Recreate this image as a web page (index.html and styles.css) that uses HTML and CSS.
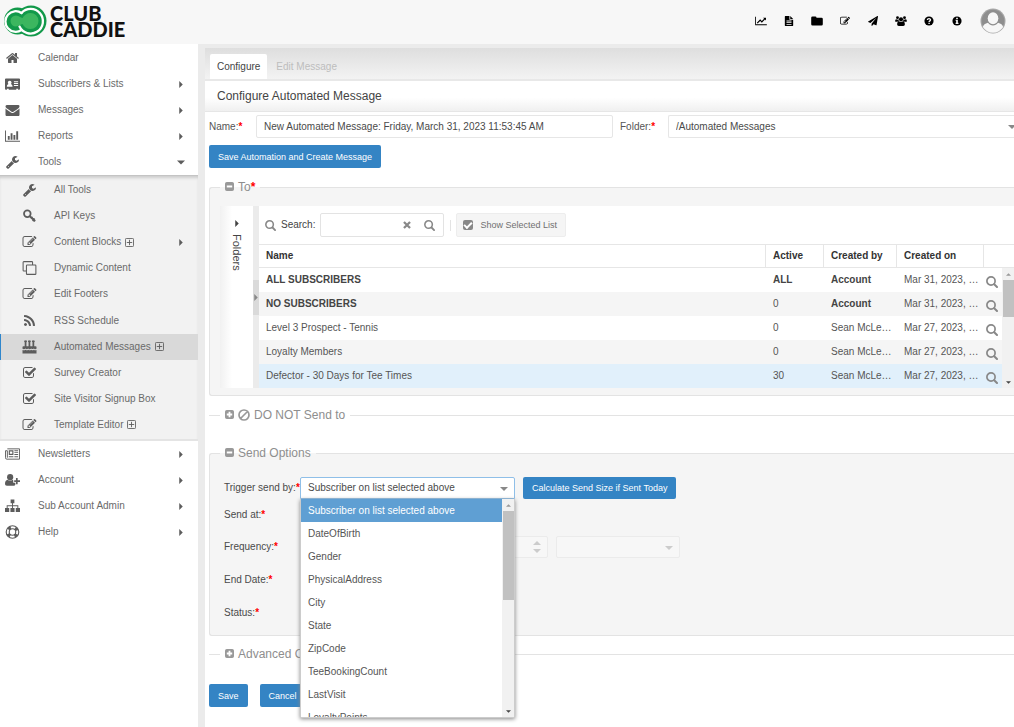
FILE: index.html
```html
<!DOCTYPE html>
<html lang="en">
<head>
<meta charset="utf-8">
<title>Configure Automated Message</title>
<link rel="stylesheet" href="styles.css">
</head>
<body>
<svg class="sprite" aria-hidden="true">
  <symbol id="home" viewBox="0 0 1792 1792"><path d="M1472 992v480q0 26-19 45t-45 19h-384v-384h-256v384h-384q-26 0-45-19t-19-45v-480q0-1 .5-3t.5-3l575-474 575 474q1 2 1 6zm223-69l-62 74q-8 9-21 11h-3q-13 0-21-7l-692-577-692 577q-12 8-24 7-13-2-21-11l-62-74q-8-10-7-23.5t11-21.5l719-599q32-26 76-26t76 26l244 204v-195q0-14 9-23t23-9h192q14 0 23 9t9 23v408l219 182q10 8 11 21.5t-7 23.5z"/></symbol>
  <symbol id="card" viewBox="0 0 16 14"><path fill-rule="evenodd" d="M1 1h14a1 1 0 0 1 1 1v10a1 1 0 0 1-1 1h-1v-1h-2v1H4v-1H2v1H1a1 1 0 0 1-1-1V2a1 1 0 0 1 1-1zM5 3.500a2 2 0 0 0-1.300 3.500C2.500 7.500 2 8.500 2 10h6c0-1.500-.5-2.500-1.700-3A2 2 0 0 0 5 3.500zM9.500 4v1H14V4zM9.500 6v1H14V6zM9.500 8v1H14V8z"/></symbol>
  <symbol id="envelope" viewBox="0 0 1792 1792"><path d="M1792 710v794q0 66-47 113t-113 47h-1472q-66 0-113-47t-47-113v-794q44 49 101 87 362 246 497 345 57 42 92.500 65.500t94.500 48 110 24.500h2q51 0 110-24.500t94.500-48 92.500-65.500q170-123 498-345 57-39 100-87zm0-294q0 79-49 151t-122 123q-376 261-468 325-10 7-42.500 31t-54 38.500-52 32.500-57.500 27-50 9h-2q-23 0-50-9t-57.500-27-52-32.500-54-38.500-42.500-31q-91-64-262-182.500t-205-142.500q-62-42-117-115.500t-55-136.500q0-78 41.500-130t118.500-52h1472q65 0 112.500 47t47.500 113z"/></symbol>
  <symbol id="bars" viewBox="0 0 16 14"><path d="M0 1h1v11h15v1H0zM3 7h2v4H3zM6 4h2v7H6zM9 6h2v5H9zM12 2h2v9h-2z"/></symbol>
  <symbol id="wrench" viewBox="0 0 1792 1792"><path d="M448 1472q0-26-19-45t-45-19-45 19-19 45 19 45 45 19 45-19 19-45zm644-420l-682 682q-37 37-90 37-52 0-91-37l-106-108q-38-36-38-90 0-53 38-91l681-681q39 98 114.500 173.500t173.500 114.500zm634-435q0 39-23 106-47 134-164.500 217.500t-258.500 83.500q-185 0-316.500-131.500t-131.500-316.500 131.500-316.500 316.500-131.500q58 0 121.500 16.500t107.500 46.500q16 11 16 28t-16 28l-293 169v224l193 107q5-3 79-48.500t135.500-81 70.500-35.500q15 0 23.500 10t8.500 25z"/></symbol>
  <symbol id="key" viewBox="0 0 16 16"><path fill="none" stroke="currentColor" stroke-width="2" d="M8 8l6.500 6M11.500 13.500l2.500-2.500M9.500 11l2-2"/><circle cx="5.500" cy="5.500" r="3.800" fill="none" stroke="currentColor" stroke-width="2"/></symbol>
  <symbol id="edit" viewBox="0 0 1792 1792"><path d="M888 1184l116-116-152-152-116 116v56h96v96h56zm440-720q-16-16-33 1l-350 350q-17 17-1 33t33-1l350-350q17-17 1-33zm80 594v190q0 119-84.500 203.500t-203.500 84.500h-832q-119 0-203.500-84.500t-84.500-203.500v-832q0-119 84.500-203.500t203.500-84.500h832q63 0 117 25 15 7 18 23 3 17-9 29l-49 49q-14 14-32 8-23-6-45-6h-832q-66 0-113 47t-47 113v832q0 66 47 113t113 47h832q66 0 113-47t47-113v-126q0-13 9-22l64-64q15-15 35-7t20 29zm-96-738l288 288-672 672h-288v-288zm444 132l-92 92-288-288 92-92q28-28 68-28t68 28l152 152q28 28 28 68t-28 68z"/></symbol>
  <symbol id="clone" viewBox="0 0 16 16"><path fill="none" stroke="currentColor" stroke-width="1.200" d="M4.500 11.500h-3a.8.8 0 0 1-.8-.8V1.500a.8.8 0 0 1 .8-.8h9.200a.8.800 0 0 1 .8.8v3M5.300 4.500h9.200a.8.800 0 0 1 .8.8v9.200a.8.800 0 0 1-.8.800H5.300a.8.800 0 0 1-.8-.8V5.300a.8.800 0 0 1 .8-.8z"/></symbol>
  <symbol id="rss" viewBox="0 0 1792 1792"><path d="M576 1344q0 80-56 136t-136 56-136-56-56-136 56-136 136-56 136 56 56 136zm512 123q2 28-17 48-18 21-47 21h-135q-25 0-43-16.500t-20-41.500q-22-229-184.500-391.500t-391.500-184.500q-25-2-41.500-20t-16.500-43v-135q0-29 21-47 17-17 43-17h5q160 13 306 80.500t259 181.500q114 113 181.500 259t80.500 306zm512 2q2 27-18 47-18 20-46 20h-143q-26 0-44.500-17.500t-19.500-42.500q-12-215-101-408.500t-231.500-336-336-231.500-408.500-102q-25-1-42.500-19.500t-17.500-43.500v-143q0-28 20-46 18-18 44-18h3q262 13 501.500 120t425.500 294q187 186 294 425.500t120 501.500z"/></symbol>
  <symbol id="cake" viewBox="0 0 16 16"><path d="M2.500 2.500a1 1 0 0 1 1-2 1 1 0 0 1 1 2V7H6.900V2.500a1 1 0 0 1 1-2 1 1 0 0 1 1 2V7h2.500V2.500a1 1 0 0 1 1-2 1 1 0 0 1 1 2V7H15a1 1 0 0 1 1 1v2c-1.500 1.200-2.500 0-3-.4-1 .9-2 1.200-3 .2-1 1-2.500 1-3.500 0-1 .9-2 1-3 0-1 .9-2.500 1-3.500.2V8a1 1 0 0 1 1-1h1.500zM0 11.500c1.500.6 2.500.3 3.500-.4 1 .9 2.200.9 3 .1 1.300.9 2.500.8 3.500 0 1 .8 2 .8 3 0 .8.700 1.800.900 3 .3V15.500H0z"/></symbol>
  <symbol id="check" viewBox="0 0 1792 1792"><path d="M1472 930v318q0 119-84.500 203.500t-203.500 84.500h-832q-119 0-203.500-84.500t-84.500-203.500v-832q0-119 84.500-203.500t203.500-84.500h832q63 0 117 25 15 7 18 23 3 17-9 29l-49 49q-10 10-23 10-3 0-9-2-23-6-45-6h-832q-66 0-113 47t-47 113v832q0 66 47 113t113 47h832q66 0 113-47t47-113v-254q0-13 9-22l64-64q10-10 23-10 6 0 12 3 20 8 20 29zm231-489l-814 814q-24 24-57 24t-57-24l-430-430q-24-24-24-57t24-57l110-110q24-24 57-24t57 24l263 263 647-647q24-24 57-24t57 24l110 110q24 24 24 57t-24 57z"/></symbol>
  <symbol id="news" viewBox="0 0 16 14"><path fill="none" stroke="currentColor" d="M2.500 1.500h13v11H2a1.500 1.500 0 0 1-1.500-1.500V3.500h2V11"/><path fill-rule="evenodd" d="M4 3h5v5H4zM5.200 4.200v2.600h2.600V4.200zM10 3h4v1h-4zM10 5h4v1h-4zM10 7h4v1h-4zM4 9.500h5v1H4zM10 9.500h4v1h-4z"/></symbol>
  <symbol id="user-plus" viewBox="0 0 16 14"><circle cx="5.500" cy="4" r="3.300"/><path d="M2.800 6.700C1 7.200 0 8.500 0 11c0 1.300.8 2 2 2h7.500c.8 0 1.300-.3 1.500-1V10H8.800V7.600L8.200 6.700c-1.500 1.200-4 1.200-5.400 0zM11.700 4.800h1.800v2.400H16V9h-2.500v2.500h-1.800V9H9.800V7.200h1.900z"/></symbol>
  <symbol id="sitemap" viewBox="0 0 16 14"><path d="M6 0h4v4H8.500v2.300h5.700V9H16v4.500h-4.500V9h1.700V7.300H8.500V9h1.700v4.500H5.800V9h1.700V7.300H2.800V9h1.700v4.500H0V9h1.800V6.300h5.700V4H6z"/></symbol>
  <symbol id="ring" viewBox="0 0 16 16"><g fill="none" stroke="currentColor"><circle cx="8" cy="8" r="7.200" stroke-width="1.300"/><circle cx="8" cy="8" r="3.700" stroke-width="1.300"/><circle cx="8" cy="8" r="5.500" stroke-width="3.500" stroke-dasharray="3.400 5.240" stroke-dashoffset="-2.600"/></g></symbol>
  <symbol id="plus-o" viewBox="0 0 10 10"><path fill="none" stroke="currentColor" d="M1.500.5h7a1 1 0 0 1 1 1v7a1 1 0 0 1-1 1h-7a1 1 0 0 1-1-1v-7a1 1 0 0 1 1-1zM5 2v6M2 5h6"/></symbol>
  <symbol id="minus-sq" viewBox="0 0 10 10"><path fill-rule="evenodd" d="M2 0h6a2 2 0 0 1 2 2v6a2 2 0 0 1-2 2H2a2 2 0 0 1-2-2V2a2 2 0 0 1 2-2zM2 4v2h6V4z"/></symbol>
  <symbol id="plus-sq" viewBox="0 0 10 10"><path fill-rule="evenodd" d="M2 0h6a2 2 0 0 1 2 2v6a2 2 0 0 1-2 2H2a2 2 0 0 1-2-2V2a2 2 0 0 1 2-2zM4 2v2H2v2h2v2h2V6h2V4H6V2z"/></symbol>
  <symbol id="ban" viewBox="0 0 12 12"><path fill="none" stroke="currentColor" stroke-width="1.700" d="M2.500 9.500l7-7M6 1a5 5 0 1 0 0 10A5 5 0 0 0 6 1z"/></symbol>
  <symbol id="search" viewBox="0 0 12 12"><circle cx="5" cy="5" r="4.100" fill="none" stroke="currentColor" stroke-width="1.700"/><path stroke="currentColor" stroke-width="2" stroke-linecap="round" d="M8.200 8.200l2.800 2.800"/></symbol>
  <symbol id="times" viewBox="0 0 10 10"><path stroke="currentColor" stroke-width="2.800" d="M1.200 1.200l7.600 7.600M8.800 1.200l-7.600 7.600"/></symbol>
  <symbol id="right" viewBox="0 0 4 8"><path d="M0 0l4 4-4 4z"/></symbol>
  <symbol id="down" viewBox="0 0 8 4"><path d="M0 0h8L4 4z"/></symbol>
  <symbol id="up" viewBox="0 0 8 4"><path d="M0 4h8L4 0z"/></symbol>
  <symbol id="line" viewBox="0 0 14 12"><path d="M0 1h1v9h13v1H0zM9.500 2H13v3.500l-1.200-1.200L8 8 6 6 3 9 2 8l4-4 2 2 2.700-2.800z"/></symbol>
  <symbol id="file" viewBox="0 0 10 12"><path fill-rule="evenodd" d="M.5 0H5.500v4.500H10v7a.5.500 0 0 1-.5.500h-9a.5.500 0 0 1-.5-.5V.5A.5.500 0 0 1 .5 0zM6.500 0L10 3.500H6.500zM2 5.500v1h6v-1zM2 7.500v1h6v-1zM2 9.500v1h6v-1z"/></symbol>
  <symbol id="folder" viewBox="0 0 12 10"><path d="M1.500.5h2.800a1.200 1.200 0 0 1 1.200 1.200h5a1.300 1.300 0 0 1 1.300 1.300v5.200a1.300 1.300 0 0 1-1.300 1.300h-9A1.300 1.300 0 0 1 .2 8.200V1.800A1.300 1.300 0 0 1 1.500.5z"/></symbol>
  <symbol id="plane" viewBox="0 0 1792 1792"><path d="M1764 11q33 24 27 64l-256 1536q-5 29-32 45-14 8-31 8-11 0-24-5l-453-185-242 295q-18 23-49 23-13 0-22-4-19-7-30.500-23.500t-11.500-36.500v-349l864-1059-1069 925-395-162q-37-14-40-55-2-40 32-59l1664-960q15-9 32-9 20 0 36 11z"/></symbol>
  <symbol id="users" viewBox="0 0 14 12"><circle cx="2.800" cy="2" r="1.700"/><circle cx="11.200" cy="2" r="1.700"/><circle cx="7" cy="4" r="2.500"/><path d="M0 6.500C0 5 .4 4 1.300 4c.8.500 1.800.5 2.700.2A3 3 0 0 0 4.800 6.300H3.500L2.700 7H1A1 1 0 0 1 0 6.500zM14 6.500C14 5 13.600 4 12.700 4c-.8.500-1.800.5-2.700.2A3 3 0 0 1 9.200 6.300h1.300l.8.700H13a1 1 0 0 0 1-.5zM4.600 6.400c-1.500.3-2.200 1.600-2.200 3.600 0 1.300.7 2 1.900 2h5.400c1.200 0 1.900-.7 1.900-2 0-2-.7-3.300-2.200-3.600-1.400 1.100-3.400 1.100-4.800 0z"/></symbol>
  <symbol id="question" viewBox="0 0 12 12"><circle cx="6" cy="6" r="5.500"/><path fill="none" stroke="#f7f7f7" stroke-width="1.600" d="M4 4.800C4.200 2.600 8 2.700 7.800 4.800 7.700 5.800 6.200 5.900 6.100 7.200M6.100 8.200v1.500"/></symbol>
  <symbol id="info" viewBox="0 0 12 12"><circle cx="6" cy="6" r="5.500"/><path fill="#f7f7f7" d="M5 2h2v1.600H5zM4.300 4.500H7v3.700h.8v1.300H4.300V8.200H5V5.800h-.7z"/></symbol>
</svg>

<header class="topbar">
  <a class="brand" href="#" aria-label="Club Caddie">
    <svg class="mark" viewBox="0 0 44 34" aria-hidden="true">
      <g fill="#12994a"><circle cx="14.500" cy="17" r="13.500"/><circle cx="28" cy="17" r="15.500"/></g>
      <g fill="none" stroke="#fff" stroke-width="2.300" stroke-linecap="round">
        <path d="M18.500 9A10.300 10.300 0 1 0 18.500 26"/>
        <path d="M16.500 22.500A12.300 12.300 0 1 0 18.500 9"/>
      </g>
      <path fill="#3cb65f" d="M13 11.500c3 0 4.500 2.500 6.500 2.500 1.500-3 4.500-5 8-5a8 8 0 1 1 0 16c-3.500 0-6.500-2-8-5-2 0-3.500 2.500-6.500 2.500a5.500 5.500 0 0 1 0-11z"/>
    </svg>
    <span class="wordmark">CLUB<br>CADDIE</span>
  </a>
  <nav class="quick" aria-label="Quick links">
    <a href="#" aria-label="Statistics"><svg><use href="#line"/></svg></a>
    <a href="#" aria-label="Files"><svg><use href="#file"/></svg></a>
    <a href="#" aria-label="Folders"><svg><use href="#folder"/></svg></a>
    <a href="#" aria-label="Compose"><svg><use href="#edit"/></svg></a>
    <a href="#" aria-label="Send"><svg><use href="#plane"/></svg></a>
    <a href="#" aria-label="Users"><svg><use href="#users"/></svg></a>
    <a href="#" aria-label="Help"><svg><use href="#question"/></svg></a>
    <a href="#" aria-label="About"><svg><use href="#info"/></svg></a>
    <a class="avatar" href="#" aria-label="Profile"><svg viewBox="0 0 26 26"><circle cx="13" cy="13" r="12.500" fill="#a6a6a6"/><circle cx="13" cy="13" r="11.300" fill="#8e8e8e"/><path fill="#f7f7f7" d="M8 14.800c1.300 1.700 3 2.700 5 2.700s3.700-1 5-2.700c3 .7 4.500 2 5.200 4.200a12 12 0 0 1-20.400 0c.7-2.200 2.200-3.500 5.200-4.200z"/><ellipse cx="13" cy="10.300" rx="5.300" ry="6" fill="#f7f7f7"/></svg></a>
  </nav>
</header>

<div class="shell">
  <nav class="side" aria-label="Main">
    <div class="group top">
      <a href="#"><svg><use href="#home"/></svg><span>Calendar</span></a>
      <a href="#"><svg><use href="#card"/></svg><span>Subscribers &amp; Lists</span><svg class="more"><use href="#right"/></svg></a>
      <a href="#"><svg><use href="#envelope"/></svg><span>Messages</span><svg class="more"><use href="#right"/></svg></a>
      <a href="#"><svg><use href="#bars"/></svg><span>Reports</span><svg class="more"><use href="#right"/></svg></a>
      <a href="#"><svg><use href="#wrench"/></svg><span>Tools</span><svg class="more"><use href="#down"/></svg></a>
    </div>
    <div class="sub">
      <a href="#"><svg><use href="#wrench"/></svg><span>All Tools</span></a>
      <a href="#"><svg><use href="#key"/></svg><span>API Keys</span></a>
      <a href="#"><svg><use href="#edit"/></svg><span>Content Blocks</span><svg class="add"><use href="#plus-o"/></svg><svg class="more"><use href="#right"/></svg></a>
      <a href="#"><svg><use href="#clone"/></svg><span>Dynamic Content</span></a>
      <a href="#"><svg><use href="#edit"/></svg><span>Edit Footers</span></a>
      <a href="#"><svg><use href="#rss"/></svg><span>RSS Schedule</span></a>
      <a class="active" href="#"><svg><use href="#cake"/></svg><span>Automated Messages</span><svg class="add"><use href="#plus-o"/></svg></a>
      <a href="#"><svg><use href="#check"/></svg><span>Survey Creator</span></a>
      <a href="#"><svg><use href="#check"/></svg><span>Site Visitor Signup Box</span></a>
      <a href="#"><svg><use href="#edit"/></svg><span>Template Editor</span><svg class="add"><use href="#plus-o"/></svg></a>
    </div>
    <div class="group">
      <a href="#"><svg><use href="#news"/></svg><span>Newsletters</span><svg class="more"><use href="#right"/></svg></a>
      <a href="#"><svg><use href="#user-plus"/></svg><span>Account</span><svg class="more"><use href="#right"/></svg></a>
      <a href="#"><svg><use href="#sitemap"/></svg><span>Sub Account Admin</span><svg class="more"><use href="#right"/></svg></a>
      <a href="#"><svg><use href="#ring"/></svg><span>Help</span><svg class="more"><use href="#right"/></svg></a>
    </div>
  </nav>

  <main class="main">
    <div class="tabs" role="tablist">
      <button class="tab on" role="tab" aria-selected="true">Configure</button>
      <button class="tab" role="tab" disabled>Edit Message</button>
    </div>
    <h1 class="title">Configure Automated Message</h1>

    <form class="form">
      <div class="name-row">
        <label for="name">Name:<b class="req">*</b></label>
        <input id="name" class="field" type="text" value="New Automated Message: Friday, March 31, 2023 11:53:45 AM">
        <label for="folder">Folder:<b class="req">*</b></label>
        <span class="pick pick-edge"><select id="folder" class="field"><option>/Automated Messages</option></select><svg><use href="#down"/></svg></span>
      </div>
      <button class="btn" type="button">Save Automation and Create Message</button>

      <fieldset class="box box-to">
        <legend><svg><use href="#minus-sq"/></svg><span>To<b class="req">*</b></span></legend>
        <div class="lists">
          <div class="folders"><svg><use href="#right"/></svg><span>Folders</span></div>
          <div class="split"><span><svg><use href="#right"/></svg></span></div>
          <div class="grid">
            <div class="tools">
              <label class="find" for="find"><svg><use href="#search"/></svg>Search:</label>
              <div class="findbox">
                <input id="find" type="text">
                <button type="button" aria-label="Clear"><svg><use href="#times"/></svg></button>
                <button type="button" aria-label="Search"><svg><use href="#search"/></svg></button>
              </div>
              <i class="sep"></i>
              <label class="show"><input type="checkbox" checked>Show Selected List</label>
            </div>
            <table>
              <colgroup><col><col class="c-active"><col class="c-by"><col class="c-on"><col class="c-view"></colgroup>
              <thead><tr><th>Name</th><th>Active</th><th>Created by</th><th>Created on</th><th></th></tr></thead>
              <tbody>
                <tr class="strong"><td>ALL SUBSCRIBERS</td><td>ALL</td><td>Account</td><td>Mar 31, 2023, …</td><td><svg><use href="#search"/></svg></td></tr>
                <tr class="strong"><td>NO SUBSCRIBERS</td><td class="plain">0</td><td>Account</td><td>Mar 31, 2023, …</td><td><svg><use href="#search"/></svg></td></tr>
                <tr><td>Level 3 Prospect - Tennis</td><td>0</td><td>Sean McLe…</td><td>Mar 27, 2023, …</td><td><svg><use href="#search"/></svg></td></tr>
                <tr><td>Loyalty Members</td><td>0</td><td>Sean McLe…</td><td>Mar 27, 2023, …</td><td><svg><use href="#search"/></svg></td></tr>
                <tr class="picked"><td>Defector - 30 Days for Tee Times</td><td>30</td><td>Sean McLe…</td><td>Mar 27, 2023, …</td><td><svg><use href="#search"/></svg></td></tr>
              </tbody>
            </table>
            <div class="bar bar-grid"><svg class="off"><use href="#up"/></svg><i></i><svg><use href="#down"/></svg></div>
          </div>
        </div>
      </fieldset>

      <fieldset class="box shut">
        <legend><svg><use href="#plus-sq"/></svg><svg class="ban"><use href="#ban"/></svg><span>DO NOT Send to</span></legend>
      </fieldset>

      <fieldset class="box box-send">
        <legend><svg><use href="#minus-sq"/></svg><span>Send Options</span></legend>
        <div class="options">
          <label for="trigger">Trigger send by:<b class="req">*</b></label>
          <div class="line">
            <div class="combo">
              <span class="pick open"><select id="trigger" class="field"><option>Subscriber on list selected above</option></select><svg><use href="#down"/></svg></span>
              <div class="menu">
                <ul role="listbox" aria-label="Trigger send by">
                  <li role="option" aria-selected="true">Subscriber on list selected above</li>
                  <li role="option">DateOfBirth</li>
                  <li role="option">Gender</li>
                  <li role="option">PhysicalAddress</li>
                  <li role="option">City</li>
                  <li role="option">State</li>
                  <li role="option">ZipCode</li>
                  <li role="option">TeeBookingCount</li>
                  <li role="option">LastVisit</li>
                  <li role="option">LoyaltyPoints</li>
                </ul>
                <div class="bar bar-menu"><svg class="off"><use href="#up"/></svg><i></i><svg><use href="#down"/></svg></div>
              </div>
            </div>
            <button class="btn" type="button">Calculate Send Size if Sent Today</button>
          </div>
          <span>Send at:<b class="req">*</b></span><span></span>
          <label for="every">Frequency:<b class="req">*</b></label>
          <div class="line faint">
            <span class="spin"><input id="every" class="field" type="text" disabled><span class="arrows"><svg><use href="#up"/></svg><svg><use href="#down"/></svg></span></span>
            <span class="pick unit"><select class="field" disabled aria-label="Frequency unit"></select><svg><use href="#down"/></svg></span>
          </div>
          <span>End Date:<b class="req">*</b></span><span></span>
          <span>Status:<b class="req">*</b></span><span></span>
        </div>
      </fieldset>

      <fieldset class="box shut last">
        <legend><svg><use href="#plus-sq"/></svg><span>Advanced Options</span></legend>
      </fieldset>

      <div class="actions">
        <button class="btn" type="button">Save</button>
        <button class="btn" type="button">Cancel</button>
      </div>
    </form>
  </main>
</div>
</body>
</html>
```
FILE: styles.css
```css
* { box-sizing: border-box; }
html, body { height: 100%; }
body {
  margin: 0;
  display: flex;
  flex-direction: column;
  overflow: hidden;
  background: #ebebeb;
  color: #555;
  font: 10px/12px "Liberation Sans", Arial, sans-serif;
}
button, input, select { font: inherit; color: inherit; margin: 0; }
a { color: inherit; text-decoration: none; }
svg { display: block; flex: none; fill: currentColor; overflow: visible; }
.sprite { position: absolute; width: 0; height: 0; }
.req { color: #f00; }

/* top bar */
.topbar { flex: none; display: flex; justify-content: space-between; align-items: center; height: 44px; padding: 0 8px 2px 3px; background: #f7f7f7; }
.brand { display: flex; align-items: center; gap: 3px; color: #111; }
.mark { width: 44px; height: 34px; }
.wordmark { font: 900 20px/16px Lato, "Liberation Sans", sans-serif; }
.quick { display: flex; align-items: center; color: #000; }
.quick a { width: 28px; display: flex; justify-content: center; }
.quick svg { width: 12px; height: 10px; }
.quick .avatar { width: 26px; margin-left: 9px; }
.quick .avatar svg { width: 26px; height: 26px; }

.shell { flex: 1; min-height: 0; display: flex; gap: 7px; }

/* side navigation */
.side { flex: none; width: 198px; background: #fff; color: #6a6a6a; }
.side a { display: flex; align-items: center; height: 26px; padding: 0 13px 0 5px; }
.side svg { width: 15px; height: 14px; color: #5c5c5c; }
.side span { margin-left: 18px; }
.side .more { width: 8px; height: 7px; margin-left: auto; }
.side .add { width: 9px; height: 9px; margin-left: 4px; }
.top { padding-top: 1px; }
.sub {
  display: grid;
  grid-auto-rows: 1fr;
  min-height: 266px;
  padding: 1px 0;
  background: #f2f2f2;
  border-top: 1px solid #c4c4c4;
  border-bottom: 2px solid #e4e4e4;
  box-shadow: inset 0 3px 3px -1px #ccc;
}
.sub a { height: auto; padding-left: 21px; border-left: 1px solid transparent; }
.sub span { margin-left: 17px; }
.sub .active { background: #d9d9d9; border-left-color: #2f86cc; }

/* main column */
.main { flex: 1; min-width: 0; background: #fff; overflow: hidden; }
.tabs { display: flex; height: 37px; padding: 6px 5px 0; background: linear-gradient(#dedede, #f3f3f3); border-top: 4px solid #ebebeb; border-bottom: 2px solid #e8e8e8; }
.tab { height: 25px; padding: 0 7px; border: 0; background: none; color: #bdbdbd; }
.tab + .tab { padding-left: 9px; }
.tab.on { background: #fff; color: #444; border-radius: 2px 2px 0 0; }
.title { margin: 0; padding: 8px 12px; font-size: 12px; line-height: 14px; font-weight: 400; color: #444; background: linear-gradient(#fff 55%, #f0f0f0); border-bottom: 1px solid #e6e6e6; }

.form { padding: 3px 0 0 4px; }
.field { height: 23px; width: 100%; padding: 0 7px; border: 1px solid #e6e6e6; border-radius: 2px; background: #fff; color: #4a4a4a; appearance: none; opacity: 1; }
.name-row { display: grid; grid-template-columns: 40px 357px 41px 1fr; column-gap: 7px; align-items: center; }
.pick { position: relative; display: block; }
.pick svg { position: absolute; right: 7px; top: 10px; width: 8px; height: 4px; color: #888; }
.pick-edge .field { border-right: 0; border-radius: 2px 0 0 2px; }
.pick-edge svg { right: -2px; }
.btn { height: 23px; padding: 0 9px; border: 0; border-radius: 2px; background: #3484c4; color: #fff; font-size: 9px; }
.name-row + .btn { display: block; margin-top: 7px; }

/* grouped sections, open towards the right edge */
.box { min-width: 0; margin: 0; padding: 0 0 0 10px; border: 1px solid #e3e3e3; border-right: 0; border-radius: 3px 0 0 3px; background: #f5f5f5; }
.box legend { display: flex; align-items: center; gap: 4px; padding: 0 5px; font-size: 12px; line-height: 14px; color: #8e8e8e; }
.box legend svg { width: 9px; height: 9px; margin-bottom: 2px; color: #999; }
.box legend .ban { width: 12px; height: 12px; margin: 0; }
.shut { padding-left: 11px; border-width: 1px 0 0; border-radius: 0; background: none; }

.box-to { margin-top: 12px; padding-bottom: 7px; }
.lists { display: grid; grid-template-columns: 33px 6px minmax(0, 1fr); margin-top: 12px; }
.folders { display: flex; flex-direction: column; align-items: center; gap: 7px; padding-top: 14px; background: linear-gradient(90deg, #f1f1f1, #fff 12px); color: #444; }
.folders svg { width: 4px; height: 7px; }
.folders span { writing-mode: vertical-rl; font-size: 11px; line-height: 12px; }
.split { display: flex; align-items: center; background: #ebebeb; }
.split span { display: flex; align-items: center; justify-content: center; width: 6px; height: 35px; background: #dadada; color: #888; }
.split svg { width: 4px; height: 7px; }
.grid { position: relative; background: #fff; }
.tools { display: flex; align-items: center; height: 38px; padding: 0 6px; }
.find { display: flex; align-items: center; gap: 5px; color: #444; }
.find svg, .findbox svg { width: 11px; height: 11px; color: #888; }
.findbox { display: flex; width: 124px; height: 24px; margin-left: 5px; padding-right: 2px; border: 1px solid #e3e3e3; border-radius: 2px; }
.findbox input { flex: 1; min-width: 0; border: 0; background: none; }
.findbox button { display: grid; place-items: center; width: 23px; padding: 0; border: 0; background: none; }
.findbox button:first-of-type svg { width: 8px; height: 8px; }
.sep { width: 1px; height: 11px; margin: 0 5px 0 6px; background: #e3e3e3; }
.show { display: flex; align-items: center; gap: 7px; height: 24px; padding: 0 8px 0 6px; border: 1px solid #ededed; border-radius: 2px; background: #f5f5f5; color: #707070; font-size: 9px; }
.show input { appearance: none; width: 10px; height: 10px; border-radius: 2px; background: #888; display: grid; place-items: center; }
.show input::before { content: ""; width: 6px; height: 3px; margin-bottom: 2px; border: solid #fff; border-width: 0 0 2px 2px; transform: rotate(-45deg); }

table { width: 100%; table-layout: fixed; border-collapse: separate; border-spacing: 0; }
.c-active { width: 58px; }
.c-by { width: 73px; }
.c-on { width: 87px; }
.c-view { width: 31px; }
th, td { padding: 0 2px 0 7px; text-align: left; white-space: nowrap; overflow: hidden; text-overflow: ellipsis; }
th { height: 24px; border: solid #e6e6e6; border-width: 1px 0 1px 1px; color: #333; }
th:first-child { border-left: 0; }
td { height: 24px; padding-left: 8px; }
td:first-child { padding-left: 7px; }
td:last-child { padding: 3px 0 0 3px; overflow: visible; }
td svg { width: 12px; height: 12px; color: #888; }
tbody tr:nth-child(even) { background: #f5f5f5; }
.strong td:nth-child(-n+3) { font-weight: 700; color: #444; }
.strong .plain:nth-child(2) { font-weight: 400; color: #555; }
tbody .picked { background: #e1f0fb; }

/* scroll bars */
.bar { display: flex; flex-direction: column; align-items: center; width: 12px; padding: 5px 0 4px; background: #f1f1f1; color: #444; }
.bar svg { width: 5px; height: 3px; }
.bar .off { color: #999; }
.bar i { width: 11px; margin: 4px 0 auto; background: #c1c1c1; }
.bar-grid { position: absolute; right: 0; top: 62px; bottom: 0; }
.bar-grid i { height: 37px; }
.bar-menu i { height: 89px; }

.shut { margin-top: 12px; }
.box-send { margin-top: 24px; padding-bottom: 6px; }
.options { display: grid; grid-template-columns: 76px 1fr; grid-template-rows: 22px 31px 33px 33px 33px; align-items: center; margin: 17px 0 0 4px; color: #4a4a4a; }
.line { display: flex; gap: 8px; }
.combo { position: relative; width: 215px; }
.combo .field { height: 22px; }
.line .btn { height: 22px; }
.open .field { border-color: #8fbfe8; border-radius: 2px 2px 0 0; }
.menu { position: absolute; z-index: 1; top: 22px; left: 0; right: 0; display: flex; height: 219px; background: #fff; border: 1px solid #ccc; border-top: 0; overflow: hidden; box-shadow: 0 1px 4px #888; }
.menu ul { flex: 1; margin: 0; padding: 0; list-style: none; }
.menu li { padding: 6px 7px 5px; color: #555; }
.menu li[aria-selected="true"] { background: #5f9fd3; color: #fff; }
.faint { color: #ccc; }
.spin { position: relative; width: 248px; }
.faint .field { height: 22px; border-color: #ebebeb; background: #f7f7f7; }
.arrows { position: absolute; right: 7px; top: 5px; display: grid; gap: 4px; }
.arrows svg { width: 8px; height: 4px; }
.unit { width: 124px; }
.unit svg { color: #ccc; }

.last { margin-top: 11px; }
.actions { display: flex; gap: 12px; margin-top: 23px; }
```
